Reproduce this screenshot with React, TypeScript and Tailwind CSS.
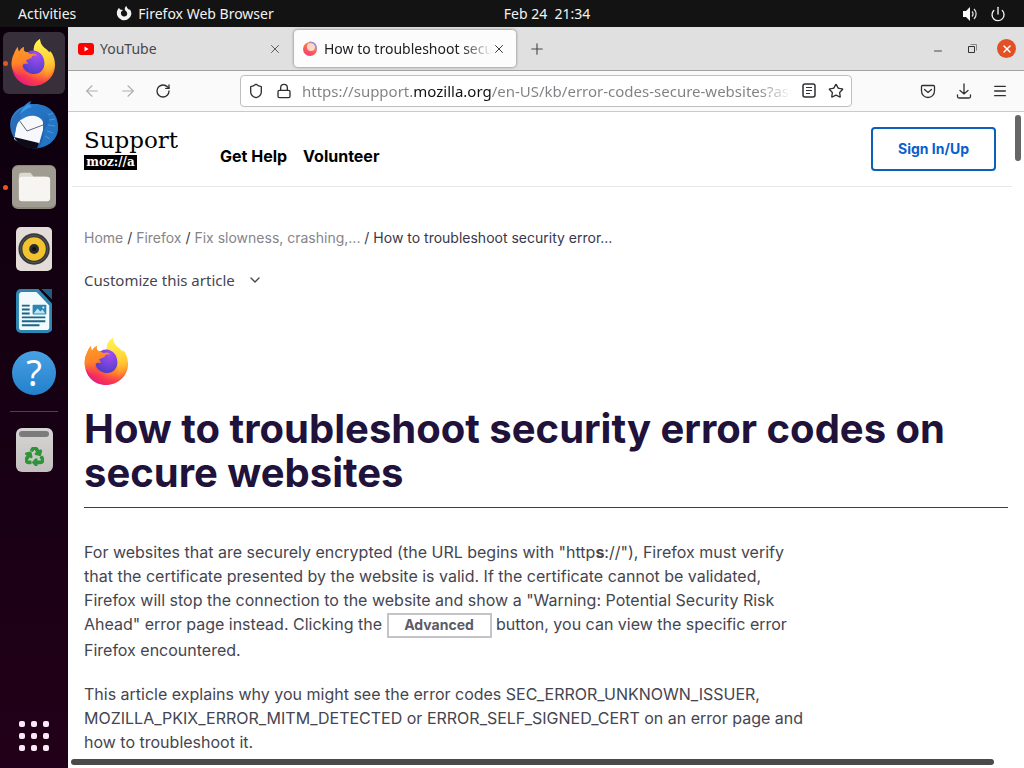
import { useId, type ReactNode } from "react";
import { ArrowLeft, ArrowRight, ChevronDown, Lock, Menu, Minus, Plus, Power, RotateCw, Shield, Star, X } from "lucide-react";
import { FaRecycle } from "react-icons/fa";

const ubuntu = "font-['Noto_Sans',sans-serif]";

function FirefoxIcon({ className }: { className: string }) {
  const id = useId();
  return (
    <svg viewBox="0 0 46 48" className={className} aria-hidden="true">
      <defs>
        <radialGradient id={`${id}a`} cx="0.78" cy="0.15" r="0.95">
          <stop offset="0.1" stopColor="#fff04a" />
          <stop offset="0.4" stopColor="#ffc62e" />
          <stop offset="0.62" stopColor="#ff852c" />
          <stop offset="0.82" stopColor="#fb3a4d" />
          <stop offset="1" stopColor="#e8207a" />
        </radialGradient>
        <radialGradient id={`${id}b`} cx="0.65" cy="0.2" r="0.85">
          <stop offset="0" stopColor="#a24df0" />
          <stop offset="0.5" stopColor="#7a45dd" />
          <stop offset="1" stopColor="#4f3cc4" />
        </radialGradient>
        <linearGradient id={`${id}c`} x1="0.3" y1="0" x2="0.5" y2="1">
          <stop offset="0" stopColor="#ff9a26" />
          <stop offset="0.5" stopColor="#ff8427" />
          <stop offset="1" stopColor="#ff5f36" stopOpacity="0" />
        </linearGradient>
        <linearGradient id={`${id}d`} x1="0.4" y1="0" x2="0.5" y2="1">
          <stop offset="0" stopColor="#fff44f" />
          <stop offset="0.5" stopColor="#ffd43a" />
          <stop offset="1" stopColor="#ff9a2a" stopOpacity="0" />
        </linearGradient>
      </defs>
      <path
        d="M3 15C4 12 5 10 7 8c0 2 0 3 1 5 1-2 2-4 5-5-1 3 0 4 1 5l9 0c-1-5 1-10 6-13 0 5 3 8 7 11l2 3 1-2c3 3 5 8 5 14 0 12-10 21-22 21S1 38 1 26c0-4 0-8 2-11z"
        fill={`url(#${id}a)`}
      />
      <path d="M23 14c-1-6 1-11 6-14 0 5 3 8 7 11 7 6 9 14 5 22-2 5-6 8-10 9 4-5 5-13 1-19-2-4-6-5-9-9z" fill={`url(#${id}d)`} />
      <path d="M17 13c5-3 12-1 15 5 3 7 1 13-4 16-7 3-14-1-16-6-1-3 0-6 1-9z" fill={`url(#${id}b)`} />
      <path
        d="M3 15C4 12 5 10 7 8c0 2 0 3 1 5 1-2 2-4 5-5-1 3 0 4 2 5 2 0 3 2 5 2 2-1 5-1 6 2-3-1-5 0-5 1-1 2-5 2-6 4 1 1 2 1 2 3-3-1-6 0-6 3 0 4 4 8 10 8-6 4-15 2-19-5C-1 26 1 19 3 15z"
        fill={`url(#${id}c)`}
      />
    </svg>
  );
}

function FirefoxMark() {
  return (
    <svg viewBox="0 0 16 16" className="size-4" fill="#f2f2f2" aria-hidden="true">
      <path d="M1.500 4 3 1.800l1 1.700 3 .5-1.800 1.700C4.500 7 5 9.500 7 10.300c2.200.9 4.300-.5 4.200-2.700 0-2-2-2.400-2.400-4C8.500 2 9.300.7 10.500 0c.1 2 1.500 2.600 2.800 4l.5-.8C15 5 15.500 6.500 15.300 8.500A7.300 7.300 0 1 1 1.500 4z" />
    </svg>
  );
}

function ThunderbirdIcon() {
  return (
    <svg viewBox="0 0 48 48" className="size-12" aria-hidden="true">
      <defs>
        <linearGradient id="bird" x1="0" y1="0" x2="1" y2="1">
          <stop offset="0" stopColor="#2f86d8" />
          <stop offset="0.5" stopColor="#2470bf" />
          <stop offset="1" stopColor="#1a4f94" />
        </linearGradient>
      </defs>
      <path d="M14 5c2-2 4-4 7-5l-1 3h5c13 0 23 9 23 22 0 12-8 20-18 22-9 1-18-1-24-8C1 34-1 25 1 18 3 12 8 7 14 5z" fill="url(#bird)" />
      <path d="M4 38 7 21l9-5c8-3 15 0 17 5l0 8-4 14C19 46 9 42 4 38z" fill="#f7f8fb" />
      <path d="m9 19 8 11 16-6" fill="none" stroke="#5b6778" strokeWidth="1" />
      <path d="m4 36 25 6-2 5C17 48 8 44 4 36z" fill="#0e0a18" />
      <path d="M14 14c6-6 17-7 23 0 4 5 1 9-2 13-2 5-1 11-6 19 12-1 20-10 19-21-1-10-7-17-15-19-8-2-16 1-19 8z" fill="#2475c4" />
      <path d="M1 27C1 18 5 9 20 6c-5 3-9 7-10 13-4 4-5 12-5 17-2-2-4-6-4-9z" fill="#2a6db8" />
      <path d="M18 3c-4 3-7 6-8 11 3-4 7-7 12-8" fill="#3d9be4" />
      <path d="m38 14 5-2m-4 7 6-1m-7 6 7 1m-8 5 6 2m-8 3 5 3" stroke="#4c97da" strokeWidth="1" />
    </svg>
  );
}

function FilesIcon() {
  return (
    <svg viewBox="0 0 45 45" className="size-11" aria-hidden="true">
      <rect width="45" height="45" rx="6" fill="#8d887d" />
      <rect y="1" width="45" height="42" rx="6" fill="#a19c91" />
      <path d="M7 11a3 3 0 0 1 3-3h9l3 4h13v6H7z" fill="#dcd9d0" />
      <rect x="7" y="12" width="32" height="25" rx="3" fill="#f6f5f1" />
    </svg>
  );
}

function RhythmboxIcon() {
  return (
    <svg viewBox="0 0 37 45" className="h-11" aria-hidden="true">
      <rect width="37" height="45" rx="5" fill="#e4dcd8" />
      <circle cx="18.500" cy="22.500" r="16" fill="#35373a" />
      <circle cx="18.500" cy="22.500" r="14" fill="none" stroke="#55585b" strokeWidth="1" />
      <circle cx="18.500" cy="22.500" r="12" fill="#f2c32c" />
      <circle cx="18.500" cy="22.500" r="5" fill="#292b2e" />
      <circle cx="18.500" cy="22.500" r="2" fill="#101113" />
    </svg>
  );
}

function WriterIcon() {
  return (
    <svg viewBox="0 0 37 45" className="h-11" aria-hidden="true">
      <path d="M5 0h18l14 15v25a5 5 0 0 1-5 5H5a5 5 0 0 1-5-5V5a5 5 0 0 1 5-5z" fill="#2e86b0" />
      <path d="M5 3h16l13 14v22a3 3 0 0 1-3 3H6a3 3 0 0 1-3-3V5z" fill="#f2fafd" />
      <path d="M26 0h11v11z" fill="#1b5f85" />
      <path d="M6 17h8M6 21h8M6 25h8M6 29h24M6 33h24M6 37h18" stroke="#1d6588" strokeWidth="2" />
      <rect x="17" y="16" width="14" height="10" rx="1" fill="#2b86b2" />
      <path d="m18 25 4-5 3 3 2-2 3 4z" fill="#bfe4f5" />
      <circle cx="28" cy="19" r="1" fill="#fff" />
    </svg>
  );
}

function DockItem({ label, running, active, children }: { label: string; running?: boolean; active?: boolean; children: ReactNode }) {
  return (
    <button
      aria-label={label}
      className={`relative flex h-[62px] w-[62px] shrink-0 items-center justify-center rounded-md ${active ? "bg-[#37303a]" : ""}`}
    >
      {running && <span className="absolute left-0 size-[5px] rounded-full bg-[#e95420]" />}
      {children}
    </button>
  );
}

function Dock() {
  return (
    <nav aria-label="Dock" className="flex w-[68px] shrink-0 flex-col items-center bg-linear-to-b from-[#0c000d] to-[#220019] pt-[5px]">
      <DockItem label="Firefox" running active>
        <FirefoxIcon className="h-12" />
      </DockItem>
      <DockItem label="Thunderbird">
        <ThunderbirdIcon />
      </DockItem>
      <DockItem label="Files" running>
        <FilesIcon />
      </DockItem>
      <DockItem label="Rhythmbox">
        <RhythmboxIcon />
      </DockItem>
      <DockItem label="LibreOffice Writer">
        <WriterIcon />
      </DockItem>
      <DockItem label="Help">
        <span className="flex size-11 items-center justify-center rounded-full bg-linear-to-b from-[#48a0e4] to-[#2380cb] font-['Noto_Sans',sans-serif] text-4xl text-white">?</span>
      </DockItem>
      <div className="my-[7px] h-px w-12 shrink-0 bg-[#51404f]" />
      <DockItem label="Trash">
        <span className="flex h-11 w-[37px] flex-col items-center gap-2.5 rounded-md bg-linear-to-b from-[#d6d5d4] to-[#c2c1c0] pt-[3px]">
          <span className="h-1.5 w-[30px] rounded-sm bg-[#7b7b7b]" />
          <FaRecycle className="size-[19px] text-[#2e9438]" stroke="#2e9438" strokeWidth={36} />
        </span>
      </DockItem>
      <button aria-label="Show Applications" className="mt-auto mb-px grid h-[62px] shrink-0 grid-cols-3 place-content-center gap-1.5">
        {Array.from({ length: 9 }, (_, i) => (
          <span key={i} className="size-1.5 rounded-xs bg-[#fbe9fa]" />
        ))}
      </button>
    </nav>
  );
}

function TopBar() {
  return (
    <header className={`grid h-[27px] shrink-0 grid-cols-[1fr_auto_1fr] items-center bg-[#131313] text-sm text-[#f2f2f2] ${ubuntu}`}>
      <div className="flex items-center gap-10 pl-[18px]">
        <button>Activities</button>
        <button className="flex items-center gap-1.5">
          <FirefoxMark />
          Firefox Web Browser
        </button>
      </div>
      <button className="pl-[70px]">Feb 24&nbsp; 21:34</button>
      <div className="flex items-center justify-end gap-3 pr-[18px]">
        <button aria-label="Volume">
          <svg viewBox="0 0 16 16" className="size-4" aria-hidden="true">
            <path d="M1 5h3l4-4v14l-4-4H1z" fill="#fff" />
            <path d="M10 5.500a3.500 3.500 0 0 1 0 5M12 3a7 7 0 0 1 0 10" fill="none" stroke="#ddd" strokeWidth="1.300" />
          </svg>
        </button>
        <button aria-label="Power">
          <Power className="size-4" strokeWidth={2} />
        </button>
      </div>
    </header>
  );
}

function TabBar() {
  return (
    <div className={`flex h-11 shrink-0 items-center border-b border-[#a3a3a6] bg-[#e0e0e0] text-sm text-[#48484c] ${ubuntu}`}>
      <div className="flex w-[226px] items-center pr-3 pl-2.5">
        <svg viewBox="0 0 16 12" className="mr-1.5 w-4" aria-hidden="true">
          <rect width="16" height="12" rx="3" fill="#f00" />
          <path d="M6.500 3.500v5l4-2.500z" fill="#fff" />
        </svg>
        <button className="flex-1 text-left">YouTube</button>
        <button aria-label="Close YouTube">
          <X className="size-3.5" strokeWidth={1.5} />
        </button>
      </div>
      <div className="flex h-[37px] w-[222px] items-center rounded-sm bg-[#fcfcfd] pr-2.5 pl-2 text-[#202024] shadow-[0_0_3px_rgba(0,0,0,0.5)]">
        <svg viewBox="0 0 16 16" className="mr-1.5 size-4 shrink-0" aria-hidden="true">
          <defs>
            <linearGradient id="ball" x1="0.8" y1="0" x2="0.3" y2="1">
              <stop offset="0" stopColor="#ffb545" />
              <stop offset="0.5" stopColor="#ff6750" />
              <stop offset="1" stopColor="#f13b78" />
            </linearGradient>
          </defs>
          <circle cx="8" cy="8" r="7" fill="url(#ball)" />
          <circle cx="9" cy="6" r="4" fill="#ffd9c6" />
          <path d="M7 1.500c5-1 8 3 7 7" fill="none" stroke="#a58bd8" strokeWidth="1.500" />
        </svg>
        <button className="flex-1 overflow-hidden text-left whitespace-nowrap [mask-image:linear-gradient(to_right,#000_82%,transparent)]">
          How to troubleshoot security error codes
        </button>
        <button aria-label="Close tab">
          <X className="size-3.5" strokeWidth={1.5} />
        </button>
      </div>
      <button aria-label="New tab" className="ml-3">
        <Plus className="size-[18px]" strokeWidth={1.5} />
      </button>
      <div className="ml-auto flex items-center pr-2">
        <button aria-label="Minimize" className="flex w-[34px] justify-center pt-1">
          <Minus className="size-3" />
        </button>
        <button aria-label="Restore" className="flex w-[34px] justify-center">
          <svg viewBox="0 0 9 9" className="size-[9px]" fill="none" stroke="#333" aria-hidden="true">
            <path d="M.5 2.500h6v6h-6z" />
            <path d="M2.500.5h6v6" stroke="#888" />
          </svg>
        </button>
        <button aria-label="Close window" className="ml-2 flex size-[19px] items-center justify-center rounded-full bg-[#e25026] text-white">
          <X className="size-3" strokeWidth={3} />
        </button>
      </div>
    </div>
  );
}

function Toolbar() {
  return (
    <div className="flex h-[41px] shrink-0 items-center border-b border-[#cacacd] bg-[#fafafb] text-[#303034]">
      <div className="flex gap-[18px] pl-[15px]">
        <button aria-label="Back" disabled className="text-[#aeaeb2]">
          <ArrowLeft className="size-[18px]" strokeWidth={1.5} />
        </button>
        <button aria-label="Forward" disabled className="text-[#aeaeb2]">
          <ArrowRight className="size-[18px]" strokeWidth={1.5} />
        </button>
        <button aria-label="Reload">
          <RotateCw className="size-4" strokeWidth={2} />
        </button>
      </div>
      <div className="mr-[68px] ml-[69px] flex h-8 flex-1 items-center rounded-sm border border-[#bfbfc2] bg-white px-[7px]">
        <Shield className="mr-3 size-4 shrink-0" strokeWidth={2} />
        <Lock className="size-4 shrink-0" strokeWidth={2} />
        <input
          aria-label="Address"
          readOnly
          value="https://support.mozilla.org/en-US/kb/error-codes-secure-websites?as=u&utm_source=inproduct"
          className={`mx-2.5 min-w-0 flex-1 bg-linear-[to_right,#808084_112px,#111_112px,#111_189px,#808084_189px] bg-clip-text text-[15px] text-transparent outline-none [mask-image:linear-gradient(to_right,#000_93%,transparent)] ${ubuntu}`}
        />
        <button aria-label="Reader view">
          <svg viewBox="0 0 14 16" className="h-4" fill="none" stroke="currentColor" aria-hidden="true">
            <rect x="1" y="1" width="12" height="13" rx="2" strokeWidth="1.500" />
            <path d="M4 4.500h6M4 7.500h6M4 10.500h4" strokeWidth="1.200" />
          </svg>
        </button>
        <button aria-label="Bookmark" className="ml-3">
          <Star className="size-4" strokeWidth={2} />
        </button>
      </div>
      <div className="flex items-center gap-5 pr-4">
        <button aria-label="Save to Pocket">
          <svg viewBox="0 0 16 16" className="size-4" fill="none" stroke="currentColor" strokeWidth="1.300" aria-hidden="true">
            <path d="M2.500 2.500h11a1 1 0 0 1 1 1V8a6.500 6.500 0 0 1-13 0V3.500a1 1 0 0 1 1-1z" />
            <path d="m4.500 6.500 3.500 3 3.500-3" strokeLinecap="round" />
          </svg>
        </button>
        <button aria-label="Downloads">
          <svg viewBox="0 0 16 16" className="size-4" fill="none" stroke="currentColor" strokeWidth="1.300" strokeLinecap="round" aria-hidden="true">
            <path d="M8 1v10M4 7.500 8 11l4-3.500M1.500 12v1.500a1.500 1.500 0 0 0 1.500 1.500h10a1.500 1.500 0 0 0 1.500-1.500V12" />
          </svg>
        </button>
        <button aria-label="Menu">
          <Menu className="size-4" strokeWidth={2} />
        </button>
      </div>
    </div>
  );
}

const crumbs = ["Home", "Firefox", "Fix slowness, crashing,..."];

function SupportPage() {
  return (
    <div className="relative flex-1 overflow-hidden bg-white font-['Inter',sans-serif] text-[#45454f]">
      <header className="mr-3 ml-1 flex h-[75px] justify-between border-b border-[#e8e8ea] pr-4 pl-3 text-black">
        <div className="flex">
          <a href="#home" className="w-24 pt-3.5 font-['DejaVu_Serif',serif]">
            <span className="block text-[23px] leading-7">Support</span>
            <span className="mt-px block w-[53px] bg-black text-center text-xs leading-[15px] font-bold text-white">moz://a</span>
          </a>
          <nav className="flex gap-4 pt-8 pl-10 text-base font-bold">
            <a href="#help">Get Help</a>
            <a href="#volunteer">Volunteer</a>
          </nav>
        </div>
        <button className="mt-[15px] h-11 w-[125px] rounded-sm border-2 border-[#0a60ba] text-sm font-bold text-[#0a60cc]">Sign In/Up</button>
      </header>
      <main className="px-4">
        <nav aria-label="Breadcrumb" className="pt-[39px] text-sm leading-6 text-[#38384a]">
          {crumbs.map((crumb) => (
            <span key={crumb}>
              <a href="#category" className="text-[#858589]">
                {crumb}
              </a>
              {" / "}
            </span>
          ))}
          How to troubleshoot security error...
        </nav>
        <button className={`mt-[18px] flex items-center gap-3 text-[15px] leading-6 ${ubuntu}`}>
          Customize this article
          <ChevronDown className="size-4" strokeWidth={2} />
        </button>
        <FirefoxIcon className="mt-[46px] h-12" />
        <h1 className="mt-[21px] border-b border-[#3d3b4c] pb-3 text-[40px] leading-11 font-bold text-[#20123a]">
          How to troubleshoot security error codes on secure websites
        </h1>
        <div className="mt-8 max-w-[724px] text-base">
          <p className="pr-4">
            For websites that are securely encrypted (the URL begins with "http<strong>s</strong>://"), Firefox must verify that the certificate presented
            by the website is valid. If the certificate cannot be validated, Firefox will stop the connection to the website and show a "Warning: Potential
            Security Risk Ahead" error page instead. Clicking the{" "}
            <button className="h-[25px] w-[105px] border-2 border-[#c4c4c8] text-sm leading-5 font-bold text-[#5c5c68]">Advanced</button> button, you can
            view the specific error Firefox encountered.
          </p>
          <p className="mt-5">
            This article explains why you might see the error codes SEC_ERROR_UNKNOWN_ISSUER, MOZILLA_PKIX_ERROR_MITM_DETECTED or
            ERROR_SELF_SIGNED_CERT on an error page and how to troubleshoot it.
          </p>
        </div>
      </main>
      <div className="absolute top-[3px] right-[3px] h-[46px] w-1.5 rounded-full bg-[#666]" />
      <div className="absolute right-[30px] bottom-[3px] left-[3px] h-1.5 rounded-full bg-[#4a4a4a]" />
    </div>
  );
}

export default function App() {
  return (
    <div className="flex h-screen flex-col overflow-hidden">
      <TopBar />
      <div className="flex min-h-0 flex-1">
        <Dock />
        <div className="flex min-w-0 flex-1 flex-col">
          <TabBar />
          <Toolbar />
          <SupportPage />
        </div>
      </div>
    </div>
  );
}
